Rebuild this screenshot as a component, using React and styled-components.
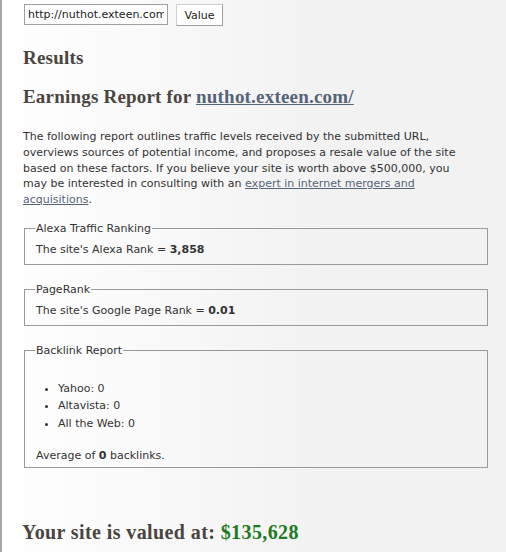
import React from "react";
import styled, { createGlobalStyle } from "styled-components";

const Global = createGlobalStyle`
  html, body {
    margin: 0;
    padding: 0;
  }
  body {
    min-height: 552px;
    background: linear-gradient(to right, #ffffff 0px, #f2f2f2 320px);
    font-family: "DejaVu Sans", Verdana, sans-serif;
    color: #333;
  }
`;

const backlinks = [
  { name: "Yahoo", count: 0 },
  { name: "Altavista", count: 0 },
  { name: "All the Web", count: 0 },
];

export default function App() {
  return (
    <>
      <Global />
      <Page>
        <Form onSubmit={(e) => e.preventDefault()}>
          <UrlInput defaultValue="http://nuthot.exteen.com/" />
          <ValueButton type="submit">Value</ValueButton>
        </Form>

        <Heading>Results</Heading>
        <Heading $tight>
          Earnings Report for <HeadLink href="#">nuthot.exteen.com/</HeadLink>
        </Heading>

        <Intro>
          The following report outlines traffic levels received by the submitted URL,
          overviews sources of potential income, and proposes a resale value of the site
          based on these factors. If you believe your site is worth above $500,000, you
          may be interested in consulting with an{" "}
          <TextLink href="#">expert in internet mergers and acquisitions</TextLink>.
        </Intro>

        <Box $first>
          <Legend>Alexa Traffic Ranking</Legend>
          <Line>
            The site's Alexa Rank = <Strong>3,858</Strong>
          </Line>
        </Box>

        <Box>
          <Legend>PageRank</Legend>
          <Line>
            The site's Google Page Rank = <Strong>0.01</Strong>
          </Line>
        </Box>

        <Box $tall>
          <Legend>Backlink Report</Legend>
          <List>
            {backlinks.map((b) => (
              <Item key={b.name}>
                {b.name}: {b.count}
              </Item>
            ))}
          </List>
          <Line>
            Average of <Strong>0</Strong> backlinks.
          </Line>
        </Box>

        <Total>
          Your site is valued at: <Money>$135,628</Money>
        </Total>
      </Page>
    </>
  );
}

const Page = styled.div`
  border-left: 2px solid #a8a8a8;
  min-height: 552px;
  box-sizing: border-box;
  padding: 4px 18px 0 21px;
`;

const Form = styled.form`
  display: flex;
  align-items: flex-start;
  gap: 8px;
  margin-left: 1px;
`;

const UrlInput = styled.input`
  width: 144px;
  height: 21px;
  box-sizing: border-box;
  border: 1px solid #a0a0a0;
  padding: 0 3px;
  font: 11px "DejaVu Sans", Verdana, sans-serif;
  color: #222;
  background: #fff;
  outline: none;
`;

const ValueButton = styled.button`
  width: 47px;
  height: 22px;
  box-sizing: border-box;
  border: 1px solid #d0d0d0;
  border-right-color: #a0a0a0;
  border-bottom-color: #a0a0a0;
  background: #fff;
  font: 11px "DejaVu Sans", Verdana, sans-serif;
  color: #222;
  padding: 0;
`;

const Heading = styled.h2`
  font: bold 19px/22px "Liberation Serif", Georgia, serif;
  color: #4a4540;
  margin: ${({ $tight }) => ($tight ? "17px" : "21px")} 0 0;
  letter-spacing: 0.2px;
`;

const HeadLink = styled.a`
  color: #56647a;
  text-decoration: underline;
`;

const Intro = styled.p`
  width: 452px;
  font-size: 11px;
  line-height: 15.8px;
  margin: 21px 0 0;
  color: #333;
`;

const TextLink = styled.a`
  color: #56647a;
  text-decoration: underline;
`;

const Box = styled.fieldset`
  margin: ${({ $first }) => ($first ? "14px" : "18px")} 0 0 1px;
  border: 1px solid #9a9a9a;
  padding: 7px 11px ${({ $tall }) => ($tall ? "3px" : "6px")};
  min-width: 0;
  font-size: 11px;
  color: #333;
`;

const Legend = styled.legend`
  padding: 0 1px;
  margin-left: -1px;
  font-size: 11px;
`;

const Line = styled.div`
  line-height: 16px;
`;

const Strong = styled.b`
  font-weight: bold;
`;

const List = styled.ul`
  margin: 16px 0 16px;
  padding-left: 22px;
`;

const Item = styled.li`
  line-height: 17.5px;
`;

const Total = styled.h2`
  font: bold 20px/24px "Liberation Serif", Georgia, serif;
  color: #4a4540;
  margin: 52px 0 0 -1px;
  letter-spacing: 0.4px;
`;

const Money = styled.span`
  color: #1e7b1e;
`;
